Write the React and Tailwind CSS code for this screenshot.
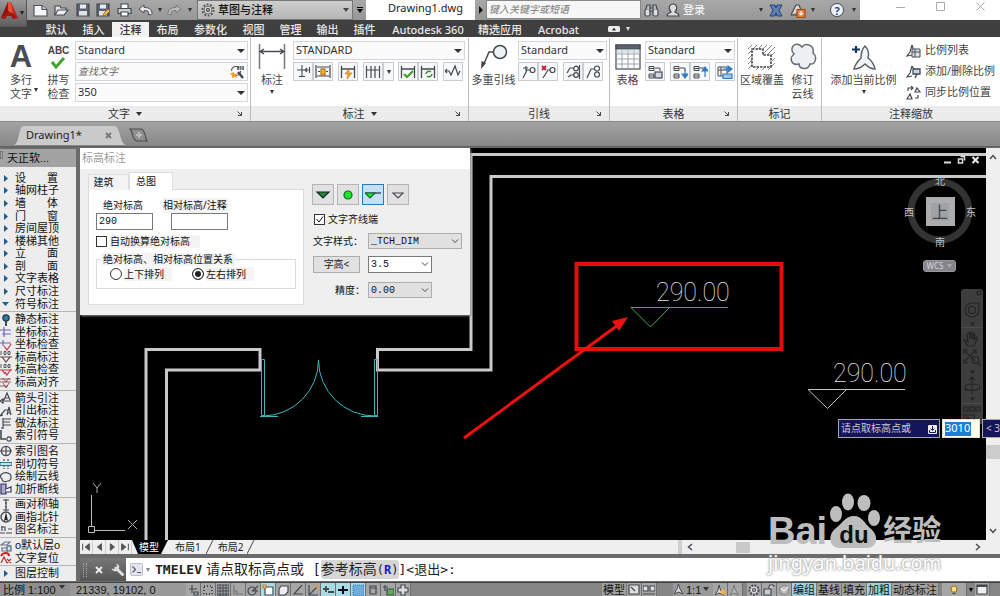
import React from "react";

const SANS = "font-['Noto_Sans','Noto_Sans_CJK_SC',sans-serif]";
const MONO = "font-['Liberation_Mono','Noto_Sans_CJK_SC',monospace]";
const DENSE = "font-['Liberation_Sans','Noto_Sans_CJK_SC',sans-serif]";

function Svg({ w = 16, h = 16, vb, children, className = "" }) {
  return (
    <svg
      width={w}
      height={h}
      viewBox={vb || `0 0 ${w} ${h}`}
      fill="none"
      stroke="#444a50"
      strokeWidth="1.2"
      className={`shrink-0 ${className}`}
      aria-hidden="true"
    >
      {children}
    </svg>
  );
}

const Down = ({ w = 7, className = "", fill = "#333" }) => (
  <svg width={w} height="4" viewBox="0 0 8 4" preserveAspectRatio="none" className={`shrink-0 ${className}`} aria-hidden="true">
    <path d="M0 0h8L4 4z" fill={fill} />
  </svg>
);

const Chevron = ({ className = "" }) => (
  <Svg w={8} h={5} className={className}>
    <path d="M1 .5l3 3 3-3" strokeWidth="1" />
  </Svg>
);

function Select({ label, value, className = "", arrow, children }) {
  return (
    <div className={`flex min-w-0 items-center ${className}`}>
      {children}
      <select aria-label={label} defaultValue={value} className="w-0 flex-1 appearance-none bg-transparent outline-none">
        <option>{value}</option>
      </select>
      {arrow || <Down w={8} />}
    </div>
  );
}

/* ---------- title bar ---------- */

function IconButton({ label, className = "", children }) {
  return (
    <button aria-label={label} className={`flex shrink-0 items-center justify-center ${className}`}>
      {children}
    </button>
  );
}

function TitleBar() {
  return (
    <header className="flex h-[20px] shrink-0 bg-linear-to-b from-[#a8a8a8] to-[#979797] text-[11px]">
      <button
        aria-label="应用程序菜单"
        className="z-10 flex h-[27px] w-[27px] shrink-0 items-center border-r border-b border-[#555] bg-linear-to-b from-[#9a9a9a] to-[#5f5f5f] pl-px"
      >
        <Svg w={18} h={20} className="mt-[-4px]">
          <path d="M7 1h3l7 16-5 1-2-4-4 0-2 4-4-1z" fill="#c3241a" stroke="none" />
          <path d="M7 1L0 17l8-5z" fill="#8f1510" stroke="none" />
          <path d="M7 1h3l2 11-5-2z" fill="#e8503c" stroke="none" />
          <path d="M0 17l7-5 5 0 5 5-5 1-2-3-4 0-2 3z" fill="#a41811" stroke="none" />
        </Svg>
        <Down w={4} fill="#222" className="ml-px" />
      </button>
      <div className="ml-[3px] flex shrink-0 items-center">
        <IconButton label="新建" className="w-[21px]">
          <Svg w={15} h={13}><path d="M1 1.5h8l5 4v6.500H1z" fill="#f4f5f7" stroke="#4d535b" /><path d="M9 1.500v4h5" fill="#c9ced4" stroke="#4d535b" /></Svg>
        </IconButton>
        <IconButton label="打开" className="w-[21px]">
          <Svg w={15} h={13}><path d="M1 11V2h5l1 2h5v2" fill="#dfe2e6" /><path d="M1 11l3-5h10l-4 5z" fill="#eef0f2" /></Svg>
        </IconButton>
        <IconButton label="保存" className="w-[21px]">
          <Svg w={14} h={14}><path d="M1 1h12v12H1z" fill="#5c636e" /><path d="M4 1.500h6v4H4z" fill="#e8ebef" stroke="none" /><path d="M3 8h8v4.500H3z" fill="#dfe3e8" stroke="none" /></Svg>
        </IconButton>
        <IconButton label="另存为" className="w-[21px]">
          <Svg w={15} h={14}><path d="M1 1h12v12H1z" fill="#5c636e" /><path d="M4 1.500h6v4H4z" fill="#e8ebef" stroke="none" /><path d="M3 8h8v4.500H3z" fill="#dfe3e8" stroke="none" /><path d="M7 13l1-3 4-4 2 2-4 4z" fill="#f0b454" stroke="#8a5a1c" strokeWidth=".7" /></Svg>
        </IconButton>
        <IconButton label="打印" className="w-[21px]">
          <Svg w={15} h={14}><path d="M4 6V1h7v5" fill="#fff" /><path d="M1 5.500h13v5H1z" fill="#c9cdd2" /><path d="M4 9h7v4H4z" fill="#fff" /></Svg>
        </IconButton>
        <IconButton label="放弃" className="w-[21px]">
          <Svg w={15} h={12}><path d="M1 5l5-4v2.500c5 0 8 2 8 6-1 2-3 1-4 1 2-3 0-4-4-4V9z" fill="#eee" strokeWidth="1" /></Svg>
        </IconButton>
        <IconButton label="放弃列表" className="w-[8px]"><Down w={4} /></IconButton>
        <IconButton label="重做" className="w-[21px]">
          <Svg w={15} h={12}><path d="M14 5L9 1v2.500c-5 0-8 2-8 6 1 2 3 1 4 1-2-3 0-4 4-4V9z" fill="#bbb" stroke="#777" strokeWidth="1" /></Svg>
        </IconButton>
        <IconButton label="重做列表" className="w-[10px]"><Down w={4} /></IconButton>
      </div>
      <Select
        label="工作空间"
        value="草图与注释"
        className="ml-[2px] w-[156px] shrink-0 gap-[3px] border border-[#777] bg-linear-to-b from-[#cfcfcf] to-[#b5b5b5] px-[3px] font-medium text-[#111]"
        arrow={<Down w={6} fill="#444" />}
      >
        <Svg w={14} h={14}><circle cx="7" cy="7" r="5.500" fill="#ddd" strokeDasharray="2 1.400" strokeWidth="2" stroke="#555" /><circle cx="7" cy="7" r="4" fill="#e4e4e4" strokeWidth="1" stroke="#666" /><circle cx="7" cy="7" r="1.800" fill="#999" strokeWidth="1" /></Svg>
      </Select>
      <IconButton label="自定义快速访问工具栏" className="w-[13px] flex-col gap-px">
        <span className="h-px w-[6px] bg-black" />
        <Down w={6} fill="#000" />
      </IconButton>
      <div className="w-[109px] shrink-0 bg-white pr-[1px] text-center leading-[16px] text-[#222]">
        <span className="ml-[11px]">Drawing1.dwg</span>
      </div>
      <IconButton label="展开搜索" className="w-[11px]">
        <Svg w={5} h={8}><path d="M1 0v8l4-4z" fill="#111" stroke="none" /></Svg>
      </IconButton>
      <input
        aria-label="搜索"
        placeholder="键入关键字或短语"
        className="mb-[1px] w-[155px] shrink-0 border border-[#888] bg-[#f7f7f7] px-[2px] text-[10px] italic outline-none placeholder:text-[#777]"
      />
      <IconButton label="查找" className="w-[21px]">
        <Svg w={15} h={14}><rect x="1" y="6" width="5" height="7" rx="1.500" fill="#ddd" /><rect x="9" y="6" width="5" height="7" rx="1.500" fill="#ddd" /><path d="M2 6l1-4h3v5M13 6l-1-4H9v5M6 5h3v3H6z" fill="#bbb" /></Svg>
      </IconButton>
      <IconButton label="用户" className="w-[21px]">
        <Svg w={14} h={14}><path d="M1 13c0-3 3-3 4-4C2 6 3 1 7 1s5 5 2 8c1 1 4 1 4 4z" fill="#ddd" /></Svg>
      </IconButton>
      <button className="shrink-0 text-white">登录</button>
      <div className="flex-1" />
      <IconButton label="登录选项" className="w-[8px]"><Down w={4} /></IconButton>
      <IconButton label="Exchange" className="w-[22px]">
        <Svg w={14} h={13}><path d="M1 1l5 0 1 3 1-3h5l-3 5.500L13 12H8L7 9l-1 3H1l3-5.500z" fill="#5b7fb5" stroke="#26406e" strokeWidth="1" /></Svg>
      </IconButton>
      <IconButton label="保持连接" className="w-[21px]">
        <Svg w={16} h={15}><path d="M1 12L6 2l3 0 2 5" fill="#ddd" /><path d="M1 12h6" /><rect x="7" y="6.500" width="8" height="8" fill="#e8813a" stroke="#a84d12" /><path d="M11 8v4m-2-2l2 2 2-2" stroke="#fff" /></Svg>
      </IconButton>
      <IconButton label="连接选项" className="w-[9px]"><Down w={4} /></IconButton>
      <IconButton label="帮助" className="ml-[8px] w-[24px]">
        <span className="flex h-[14px] w-[14px] items-center justify-center rounded-full border border-[#445] bg-[#eef3fa] text-[11px] leading-none font-bold text-[#1f4c94]">?</span>
      </IconButton>
      <IconButton label="帮助选项" className="w-[10px]"><Down w={4} /></IconButton>
      <div className="ml-[1px] flex shrink-0 items-center bg-white pb-[8px] pl-[20px]">
        <IconButton label="最小化" className="w-[40px]"><Svg w={9} h={9}><path d="M0 5.500h9" stroke="#aaa" strokeWidth="1" /></Svg></IconButton>
        <IconButton label="最大化" className="w-[40px]"><Svg w={9} h={9}><path d="M.5.5h8v8h-8z" stroke="#aaa" strokeWidth="1" /></Svg></IconButton>
        <IconButton label="关闭" className="w-[40px]"><Svg w={9} h={9}><path d="M.5.5l8 8m0-8l-8 8" stroke="#aaa" strokeWidth="1" /></Svg></IconButton>
      </div>
    </header>
  );
}

/* ---------- ribbon ---------- */

const TABS = [
  ["默认", "w-[37px]"], ["插入", "w-[37px]"], ["注释", "w-[37px]"], ["布局", "w-[37px]"], ["参数化", "w-[49px]"],
  ["视图", "w-[37px]"], ["管理", "w-[37px]"], ["输出", "w-[37px]"], ["插件", "w-[37px]"], ["Autodesk 360", "w-[90px]"],
  ["精选应用", "w-[54px]"], ["Acrobat", "w-[63px]"],
];

function TabRow() {
  return (
    <nav className="flex h-[17px] shrink-0 items-end bg-[#3f3f3f] pl-[38px] text-[11px] leading-[15px] font-medium">
      {TABS.map(([t, w]) => (
        <button key={t} className={`h-[15px] shrink-0 whitespace-nowrap ${w} ${t === "注释" ? "bg-[#f1f1f1] text-[#333]" : "text-[#e8e8e8]"}`}>
          {t}
        </button>
      ))}
      <IconButton label="最小化功能区" className="ml-[18px] h-[17px] gap-[6px]">
        <Svg w={12} h={6}><rect width="12" height="6" rx="1.500" fill="#eee" stroke="none" /><path d="M4 4.500l2-3 2 3z" fill="#333" stroke="none" /></Svg>
        <Down w={4} fill="#ddd" />
      </IconButton>
    </nav>
  );
}

function Panel({ title, menu, launcher, className, children }) {
  return (
    <section className={`flex flex-col border-r border-[#bdbdbd] ${className}`}>
      <div className="flex flex-1 pt-[3px]">{children}</div>
      <div className="flex h-[15px] items-center bg-[#ececec] px-[5px] text-[11px] text-[#333]">
        <span className="w-[8px]" />
        <span className="flex flex-1 items-center justify-center gap-[6px] leading-[15px]">
          {title}
          {menu && <Down w={6} />}
        </span>
        <span className="w-[8px]">
          {launcher && (
            <button aria-label={`${title}设置`} className="flex h-[8px] w-[8px] items-center">
              <Svg w={5} h={5}><path d="M.5.500l4 4M4.500 1v3.500H1" strokeWidth="1" /></Svg>
            </button>
          )}
        </span>
      </div>
    </section>
  );
}

function Big({ icon, lines, arrow, sideArrow, className }) {
  return (
    <button className={`flex shrink-0 flex-col items-center text-[11px] leading-[14px] text-[#444] ${DENSE} ${className}`}>
      <span className="flex h-[32px] items-center">{icon}</span>
      {lines.map((l, i) => (
        <span key={l} className="flex items-center whitespace-nowrap">
          {l}
          {sideArrow && i === 1 && <Down w={4} className="-mr-[6px] ml-[2px] mb-[8px]" />}
        </span>
      ))}
      {arrow && <Down w={4} className="mt-[3px]" />}
    </button>
  );
}

function Tool({ label, children, w = "w-[20px]" }) {
  return (
    <button aria-label={label} className={`flex h-[19px] shrink-0 items-center justify-center border border-[#c9cdd2] bg-[#f7f8f9] ${w}`}>
      {children}
    </button>
  );
}

const combo = "h-[19px] border border-[#d3d6da] bg-[#fbfbfb] px-[2px] text-[11px] text-[#333]";

const dimBase = <path d="M1.500 2v12M14.500 2v12M2 5h12" strokeWidth="1.300" />;
const tableLinks = (
  <>
    <path d="M1 1.500h5v4H1zM1 9h5v4H1zM1 3.500h5M1 11h5" strokeWidth="1" />
    <path d="M7 3h5v3" strokeWidth="1" />
  </>
);

function Ribbon() {
  return (
    <div className="flex h-[85px] shrink-0 border-b border-[#8a8a8a] bg-white pt-px">
      <Panel title="文字" menu launcher className="w-[251px] shrink-0">
        <Big className="w-[42px]" lines={["多行", "文字"]} sideArrow
          icon={<span className="text-[31px] leading-[32px] font-bold text-[#4a4e54]">A</span>} />
        <Big className="w-[33px]" lines={["拼写", "检查"]}
          icon={<span className="flex flex-col items-center text-[10px] leading-[11px] font-bold text-[#444]">ABC
            <Svg w={16} h={13}><path d="M2 6l4 5 8-9" stroke="#43a52d" strokeWidth="3" /></Svg></span>} />
        <div className="flex flex-1 flex-col gap-[2px] pr-[2px]">
          <Select label="文字样式" value="Standard" className={combo} />
          <div className={`flex items-center ${combo}`}>
            <input aria-label="查找文字" placeholder="查找文字" className="w-0 flex-1 text-[10px] italic outline-none placeholder:text-[#666]" />
            <button aria-label="查找">
              <Svg w={15} h={14}><circle cx="6" cy="6" r="4.500" strokeDasharray="10 4" /><path d="M8 7l5 6" strokeWidth="2.500" /><path d="M7 4h7M7 2h7" strokeWidth="1.500" strokeDasharray="2 .6" /><path d="M3 7l2 2 2-1-1 3 1 2-3-1-2 1V10L0 9z" fill="#efa12d" stroke="none" /></Svg>
            </button>
          </div>
          <Select label="文字高度" value="350" className={combo} />
        </div>
      </Panel>

      <Panel title="标注" menu launcher className="w-[218px] shrink-0">
        <Big className="w-[42px]" lines={["标注"]} arrow
          icon={<Svg w={28} h={26}><path d="M1.500 0v25M26.500 0v25" strokeWidth="1.500" stroke="#777" /><path d="M2 7.500h24M6 5L2 7.500 6 10M22 5l4 2.500-4 2.500" strokeWidth="1.300" /></Svg>} />
        <div className="flex flex-1 flex-col gap-[2px] pr-[3px]">
          <Select label="标注样式" value="STANDARD" className={combo} />
          <div className="flex">
            <Tool label="打断"><Svg w={15} h={15}><path d="M1 6h8M6 1v11M3 12.500h6M13.500 3v6M9 6h4M11 4l-2 2 2 2" strokeWidth="1.100" /></Svg></Tool>
            <Tool label="调整间距"><Svg w={16} h={15}><path d="M1 1v13M15 1v13M2 3h12M2 12h12M3 7.500h2M11 7.500h2" /><rect x="6" y="5" width="4" height="6" fill="#f2b33c" stroke="#a87410" /></Svg></Tool>
            <span className="w-[5px]" />
            <Tool label="快速标注"><Svg w={16} h={15}>{dimBase}<path d="M9 5L5 10h3l-1 5 5-6H9z" fill="#f2a22d" stroke="#c77612" strokeWidth=".6" /></Svg></Tool>
            <span className="w-[5px]" />
            <Tool label="连续"><Svg w={16} h={15}><path d="M1.500 2v12M6 2v12M10 2v12M14.500 2v12M2 6h12" /></Svg></Tool>
            <Tool label="连续选项" w="w-[11px]"><Down w={4} /></Tool>
            <span className="w-[4px]" />
            <Tool label="检验"><Svg w={16} h={15}>{dimBase}<path d="M4 10l3 3 6-6" stroke="#3fa22b" strokeWidth="2.200" /></Svg></Tool>
            <Tool label="更新"><Svg w={16} h={15}>{dimBase}<path d="M6 10a3 3 0 015-2M12 10a3 3 0 01-5 2" stroke="#3b8f2b" strokeWidth="1.500" /></Svg></Tool>
            <span className="w-[5px]" />
            <Tool label="折弯标注"><Svg w={16} h={15}><path d="M0 7h4l2 4 4-9 3 9 2-4M2 5L0 7l2 2" /></Svg></Tool>
          </div>
        </div>
      </Panel>

      <Panel title="引线" launcher className="w-[141px] shrink-0">
        <Big className="w-[49px]" lines={["多重引线"]}
          icon={<Svg w={28} h={26}><circle cx="20" cy="8" r="6.500" fill="#eef1f5" strokeWidth="1.500" /><path d="M13.500 8H9L3 22" strokeWidth="1.500" /><path d="M1 25l.5-8 4.500 2z" fill="#444" stroke="none" /></Svg>} />
        <div className="flex flex-1 flex-col gap-[2px] pr-[2px]">
          <Select label="多重引线样式" value="Standard" className={combo} />
          <div className="flex">
            <Tool label="添加引线"><Svg w={15} h={14}><circle cx="11.500" cy="5" r="2.500" /><path d="M9 5H6l-4 8M5 1v5M2 3h5" /></Svg></Tool>
            <Tool label="删除引线"><Svg w={15} h={14}><circle cx="11.500" cy="5" r="2.500" /><path d="M9 5H7l-5 8" /><path d="M1 1l4 4M5 1L1 5" stroke="#c8202a" strokeWidth="1.800" /></Svg></Tool>
            <span className="w-[5px]" />
            <Tool label="对齐"><Svg w={15} h={14}><circle cx="10" cy="3.500" r="2.300" /><circle cx="10" cy="10" r="2.300" /><path d="M8 3H4L1 8M8 10H5l-3 2M13.500 0v14" /></Svg></Tool>
            <Tool label="合并"><Svg w={15} h={14}><circle cx="11" cy="3.500" r="2.500" /><circle cx="11" cy="9.500" r="2.500" /><path d="M8 4H5L1 13" /></Svg></Tool>
          </div>
        </div>
      </Panel>

      <Panel title="表格" launcher className="w-[128px] shrink-0">
        <Big className="w-[35px]" lines={["表格"]}
          icon={<Svg w={26} h={27}><rect x="1" y="1" width="24" height="24" fill="#fff" /><path d="M1 1h24v4H1z" fill="#5b636d" /><path d="M1 10h24M1 15h24M1 20h24M7 5v20M13 5v20M19 5v20" stroke="#9aa2ab" strokeWidth="1" /><path d="M1.500 5.500h23v4h-23z" fill="#c5d2e3" stroke="none" opacity=".6" /></Svg>} />
        <div className="flex flex-1 flex-col gap-[2px] pr-[2px]">
          <Select label="表格样式" value="Standard" className={combo} />
          <div className="flex justify-between">
            <Tool label="数据链接"><Svg w={15} h={14}>{tableLinks}<rect x="7" y="7" width="7" height="6" fill="#cfd8e2" /></Svg></Tool>
            <span className="flex">
              <Tool label="从源下载"><Svg w={15} h={14}>{tableLinks}<path d="M12 5v6M9 9l3 4 3-4z" fill="#2f7dc4" stroke="#2f7dc4" /></Svg></Tool>
              <Tool label="上载到源"><Svg w={15} h={14}>{tableLinks}<path d="M12 12V5M9 6l3-4 3 4z" fill="#2f7dc4" stroke="#2f7dc4" /></Svg></Tool>
            </span>
            <Tool label="提取数据"><Svg w={16} h={14}><path d="M1 2h9v9H1zM1 5h9M4 2v9" strokeWidth="1" /><path d="M6 4h6M11 1l4 3-4 3z" fill="#2f7dc4" stroke="#2f7dc4" /><path d="M6 9h9v4.500H6z" fill="#9cc6ea" stroke="#2f7dc4" /></Svg></Tool>
          </div>
        </div>
      </Panel>

      <Panel title="标记" className="w-[84px] shrink-0">
        <Big className="w-[48px]" lines={["区域覆盖"]}
          icon={<Svg w={28} h={27}><path d="M0 5l4-4M0 10L9 1M0 15l5-5M0 20l5-5M0 25l5-5M10 5l4-4M15 5l4-4M15 10l9-9M19 11l8-8M22 13l5-5M24 17l3-3M24 22l3-3M8 26l3-3M14 26l3-3M20 26l5-5" stroke="#8a8a8a" strokeWidth="1" /><path d="M4 5h11v6h8v12H4z" fill="#fff" strokeWidth="1.600" strokeDasharray="2.500 1" /></Svg>} />
        <Big className="w-[33px]" lines={["修订", "云线"]}
          icon={<Svg w={28} h={28}><path d="M13 4c3-5 13-2 11 6 5 4 2 12-3 11-2 7-11 5-11 0-8 2-10-6-5-10-6-6 2-14 8-7z" fill="#eef0f3" stroke="#666c74" strokeWidth="1.500" /></Svg>} />
      </Panel>

      <Panel title="注释缩放" className="min-w-[178px] flex-1 border-r-0">
        <Big className="w-[83px]" lines={["添加当前比例"]} arrow
          icon={<Svg w={26} h={27}><path d="M14 2c3 3 4 8 3 12 4 3 6 6 7 11-4 0-7-2-10-5-3 3-6 5-11 5 1-5 4-8 7-11 0-4 1-9 4-12z" fill="#f2f4f6" stroke="#565c64" strokeWidth="1.400" /><path d="M5 2v7M1 5.500h8" stroke="#14335f" strokeWidth="2.200" /></Svg>} />
        <div className="flex flex-col gap-[2px] pl-[1px] text-[11px] text-[#444]">
          <button className="flex h-[19px] items-center gap-[4px] whitespace-nowrap">
            <Svg w={15} h={14}><path d="M6 1L4 8l-3 4 5-1M6 1l2 6" /><path d="M6 5h8v8H6zM9 5v8M6 8h8" fill="#dde3ea" strokeWidth="1" /></Svg>比例列表
          </button>
          <button className="flex h-[19px] items-center gap-[4px] whitespace-nowrap">
            <Svg w={15} h={14}><path d="M6 1L4 8l-3 4 5-1M6 1l2 3" /><path d="M7 4h7v5H7zM9 13l2-4 2 0" fill="#c9d6e6" strokeWidth="1.300" /></Svg>添加/删除比例
          </button>
          <button className="flex h-[19px] items-center gap-[4px] whitespace-nowrap">
            <Svg w={15} h={14}><path d="M4 8l2 5H1zM11 2l3 4H9zM2 5V2h4M5 0l2 2-2 2M9 12h3V9" /></Svg>同步比例位置
          </button>
        </div>
      </Panel>
    </div>
  );
}

function FileTabs() {
  return (
    <div className="flex h-[25px] shrink-0 items-end border-b border-[#5e5e5e] bg-linear-to-b from-[#a2a2a2] to-[#888] pb-px pl-[14px]">
      <div className="flex">
        <svg width="10" height="19" viewBox="0 0 10 19" aria-hidden="true"><path d="M0 19C6 17 4 0 10 0v19z" fill="#cacaca" /></svg>
        <div className="flex h-[19px] w-[90px] items-center justify-between bg-[#cacaca] pr-[2px] pl-[2px] text-[11px] text-[#222]">
          Drawing1*
          <IconButton label="关闭 Drawing1"><Svg w={7} h={7}><path d="M1 1l5 5M6 1L1 6" stroke="#777" strokeWidth="1.800" /></Svg></IconButton>
        </div>
        <svg width="12" height="19" viewBox="0 0 12 19" aria-hidden="true"><path d="M0 0c7 0 5 17 12 19H0z" fill="#cacaca" /></svg>
      </div>
      <IconButton label="新建图形" className="mb-[3px] ml-[3px]">
        <Svg w={19} h={14}><path d="M1 1h11c5 1 4 10 6 12H8C3 12 4 4 1 1z" fill="#8e8e8e" stroke="#4c4c4c" /><path d="M10 4v6M7 7h6" stroke="#bbb" strokeWidth="2" /></Svg>
      </IconButton>
    </div>
  );
}

/* ---------- side menu ---------- */

const ic = {
  static: <><circle cx="6" cy="4" r="3.200" fill="#2c7b9b" stroke="#153b4c" /><path d="M6 7v5" strokeWidth="2" /></>,
  coord: <path d="M0 4h11M2 8h9M4 1v10" stroke="#6a6ab0" />,
  coordCheck: <><path d="M0 4h11M3 1v6" stroke="#6a6ab0" /><path d="M4 7l3 4 4-6" stroke="#c34" /></>,
  elev: <><path d="M1 0v4M4 .5h2v3H4zM8 .5h2v3H8z" strokeWidth=".9" /><path d="M0 6h12M2 6l4 5 4-5" stroke="#644" /></>,
  elevCheck: <><path d="M1 0v4M4 .5h2v3H4zM8 .5h2v3H8z" strokeWidth=".9" /><path d="M0 6h12M2 6l3 4M5 8l2 3 4-6" stroke="#c34" /></>,
  align: <path d="M0 2h11M0 5h11M0 9h8M3 1l3 4 3-4M3 6l3 5 3-5" stroke="#844" strokeWidth=".9" />,
  arrow: <path d="M0 9l3-2v4zM2 9h9M4 8l3-7 3 7M5 6h4" />,
  leader: <path d="M0 11l5-6h5M0 11l3-1M7 10l2-8 2 8M7 8h4" />,
  method: <path d="M3 1v11M3 2h8M3 5h7M3 8h8M1 11h2" />,
  index: <><path d="M1 0v9h5M1 0v4" strokeWidth="1.600" /><circle cx="9" cy="9" r="2.200" /></>,
  indexName: <><circle cx="6" cy="6" r="4.600" strokeWidth="1.400" /><path d="M0 6h12M6 1v10" /></>,
  section: <><path d="M4 1v10M8 1v10" strokeDasharray="2 1" /><path d="M0 4.500h12v3H0z" fill="#bfe6e6" stroke="#378" /></>,
  cloud: <path d="M2 3c3-3 6-1 8 0 2 3 1 7-2 7-3 1-6 1-6-2C0 6 0 4 2 3z" />,
  breakLine: <><path d="M1 1h5v10H1z" fill="#aac" stroke="#336" /><path d="M6 6l5-2v5H6" fill="#fff" stroke="#336" /></>,
  axis: <path d="M6 0v12M3 1h6M3 11h6M5 4h2M5 8h2" />,
  north: <><circle cx="6" cy="6" r="5" strokeWidth="1.400" /><path d="M6 1l2 9-2-1-2 1z" fill="#222" stroke="none" /></>,
  name: <path d="M0 9h5M1 3h4v4M2 2v5M8 5h4M6 9h6" />,
  layer: <><path d="M1 5l4-3h5l-3 3zM1 8h6l3-3M2 8v3h6" stroke="#678" /><path d="M7 6h4v5H7z" fill="#cde" stroke="#567" /></>,
  reset: <><path d="M1 4c2-4 8-4 8 0" stroke="#c22" strokeWidth="2" /><path d="M1 11l3-6 3 6M7 7l4 4M11 7l-4 4" stroke="#a33" /></>,
};

const GROUPS = [
  { grow: "flex-11", items: ["设 置", "轴网柱子", "墙 体", "门 窗", "房间屋顶", "楼梯其他", "立 面", "剖 面", "文字表格", "尺寸标注", "符号标注"] },
  { grow: "flex-6", items: ["静态标注", "坐标标注", "坐标检查", "标高标注", "标高检查", "标高对齐"], icons: ["static", "coord", "coordCheck", "elev", "elevCheck", "align"] },
  { grow: "flex-4", items: ["箭头引注", "引出标注", "做法标注", "索引符号"], icons: ["arrow", "leader", "method", "index"] },
  { grow: "flex-4", items: ["索引图名", "剖切符号", "绘制云线", "加折断线"], icons: ["indexName", "section", "cloud", "breakLine"] },
  { grow: "flex-3", items: ["画对称轴", "画指北针", "图名标注"], icons: ["axis", "north", "name"] },
  { grow: "flex-2", items: ["o默认层o", "文字复位"], icons: ["layer", "reset"] },
  { grow: "flex-1", items: ["图层控制"] },
];

function SideMenu() {
  return (
    <aside className={`mr-[4px] flex w-[76px] shrink-0 flex-col bg-[#ededed] text-[11px] text-[#111] ${DENSE}`}>
      <div className="flex h-[20px] shrink-0 items-center border-t-2 border-[#6b6b6b] bg-[#a3a3a3]">
        <span className="mb-[6px] h-[8px] w-[3px] border border-[#777]" />
        <span className="pl-[4px]">天正软...</span>
      </div>
      <div className="flex flex-1 flex-col divide-y divide-[#b5b5b5] pt-[4px]">
        {GROUPS.map((g, gi) => (
          <div key={gi} className={`flex min-h-0 flex-col py-px ${g.grow}`}>
            {g.items.map((t, i) => (
              <button key={t} className="flex min-h-0 flex-1 items-center leading-none">
                <span className="flex w-[15px] shrink-0">
                  {g.icons ? (
                    <Svg w={12} h={12}>{ic[g.icons[i]]}</Svg>
                  ) : t === "符号标注" ? (
                    <Down w={7} fill="#1f5c92" className="ml-[2px]" />
                  ) : (
                    <Svg w={4} h={7} className="ml-[4px]"><path d="M0 0v7l4-3.500z" fill="#1f5c92" stroke="none" /></Svg>
                  )}
                </span>
                <span className="flex w-[43px] justify-between whitespace-nowrap">
                  {t.split(" ").map((p) => <span key={p}>{p}</span>)}
                </span>
              </button>
            ))}
          </div>
        ))}
      </div>
    </aside>
  );
}

/* ---------- elevation dialog ---------- */

function Dialog() {
  const modes = [
    ["实心三角", <path d="M2 4h12l-6 6z" fill="#1f8a2c" stroke="#123" />],
    ["圆点", <circle cx="8" cy="7" r="4" fill="#25e22b" stroke="#163" />],
    ["三角引线", <><path d="M0 5h16" stroke="#234" /><path d="M0 5h10l-5 5z" fill="#25e22b" stroke="#163" /></>],
    ["空心三角", <path d="M3 5h10l-5 5z" />],
  ];
  return (
    <div role="dialog" aria-label="标高标注" className="absolute top-0 left-0 flex h-[167px] w-[390px] flex-col bg-[#efefef] text-[10px] text-[#111] shadow-[1px_1px_2px_#888]">
      <div className="h-[21px] bg-white pl-[2px] text-[11px] leading-[20px] text-[#9a9a9a]">标高标注</div>
      <div className="flex flex-1">
        <div className="ml-[8px] w-[216px] pt-[3px]">
          <div className="flex items-end">
            <button className="h-[16px] w-[41px] border border-b-0 border-[#ddd] bg-[#f3f3f3] pr-[10px]">建筑</button>
            <button className="h-[18px] w-[44px] border border-b-0 border-[#ddd] bg-white pr-[10px]">总图</button>
          </div>
          <div className="-mt-px h-[116px] border border-[#dcdcdc] bg-white px-[7px] pt-[8px]">
            <div className="flex gap-[18px]">
              <label className="flex w-[57px] flex-col">
                <span className="pl-[7px] leading-[15px] whitespace-nowrap">绝对标高</span>
                <input defaultValue="290" className={`h-[17px] w-[57px] border border-[#7a7a7a] bg-white px-[2px] ${MONO}`} />
              </label>
              <label className="flex flex-col">
                <span className="-ml-[8px] bg-[#f4f4f4] leading-[15px] whitespace-nowrap">相对标高/注释</span>
                <input className="h-[17px] w-[57px] border border-[#7a7a7a] bg-white px-[2px]" />
              </label>
            </div>
            <label className="mt-[5px] flex items-center gap-[3px] leading-[13px]">
              <input type="checkbox" className="h-[11px] w-[11px] appearance-none border border-[#333] bg-white" />
              <span className="bg-[#f4f4f4] pr-[10px]">自动换算绝对标高</span>
            </label>
            <fieldset className="mt-[5px] h-[36px] border border-[#dcdcdc] px-[4px]">
              <legend className="bg-[#f4f4f4] px-[2px] leading-[13px]">绝对标高、相对标高位置关系</legend>
              <div className="flex items-center gap-[20px] pt-px pl-[9px]">
                <label className="flex items-center gap-[2px] leading-[14px]">
                  <input type="radio" name="pos" className="h-[12px] w-[12px] appearance-none rounded-full border border-[#333] bg-white" />
                  <span className="bg-[#f4f4f4] pr-[8px]">上下排列</span>
                </label>
                <label className="flex items-center gap-[2px] leading-[14px]">
                  <input type="radio" name="pos" defaultChecked className="h-[12px] w-[12px] appearance-none rounded-full border border-[#333] bg-[#222] shadow-[inset_0_0_0_2px_white]" />
                  <span className="bg-[#f4f4f4] pr-[8px]">左右排列</span>
                </label>
              </div>
            </fieldset>
          </div>
        </div>
        <div className="ml-[8px] flex w-[150px] flex-col pt-[15px]">
          <div className="flex gap-[3px]">
            {modes.map(([n, d], i) => (
              <button key={n} aria-label={n} className={`flex h-[21px] w-[22px] items-center justify-center border ${i === 2 ? "border-[#2a7ab8] bg-[#c5e0f5]" : "border-[#b4b4b4] bg-[#e1e1e1]"}`}>
                <Svg w={16} h={14} className="mr-px">{d}</Svg>
              </button>
            ))}
          </div>
          <label className="mt-[8px] flex items-center gap-[3px] pl-[2px] leading-[13px]">
            <span className="grid">
              <input type="checkbox" defaultChecked className="col-start-1 row-start-1 h-[11px] w-[11px] appearance-none border border-[#333] bg-white" />
              <Svg w={11} h={11} className="pointer-events-none col-start-1 row-start-1"><path d="M2.500 5l2.500 3 4-5.500" strokeWidth="1" stroke="#111" /></Svg>
            </span>
            文字齐线端
          </label>
          <div className="mt-[7px] flex items-center justify-between">
            <span className="pl-[1px]">文字样式：</span>
            <Select label="文字样式" value="_TCH_DIM" arrow={<Chevron />} className={`h-[16px] w-[94px] border border-[#adadad] bg-[#e1e1e1] px-[2px] ${MONO}`} />
          </div>
          <div className="mt-[7px] flex items-center gap-[8px]">
            <button className="ml-[1px] h-[17px] w-[47px] border border-[#adadad] bg-[#e1e1e1]">字高&lt;</button>
            <Select label="字高" value="3.5" arrow={<Chevron />} className={`h-[17px] w-[64px] border border-[#7a7a7a] bg-white px-[2px] ${MONO}`} />
          </div>
          <div className="mt-[9px] flex items-center">
            <span className="w-[56px] pl-[23px] whitespace-nowrap">精度：</span>
            <Select label="精度" value="0.00" arrow={<Chevron />} className={`h-[16px] w-[64px] border border-[#adadad] bg-[#e1e1e1] px-[2px] ${MONO}`} />
          </div>
        </div>
      </div>
    </div>
  );
}

/* ---------- drawing area ---------- */

function Drawing() {
  return (
    <svg width="906" height="392" viewBox="80 148 906 392" className="absolute top-0 left-0" fill="none" aria-label="图形">
      <g stroke="#c9c9c9" strokeWidth="3">
        <path d="M146 540V349.500H260V370H166.500V540" />
        <path d="M986 154.500H471V349.500H377.500V370H491V176.500H986" />
      </g>
      <g stroke="#3fb6bd" strokeWidth="1">
        <path d="M261.500 359.500h3v56h-3zM374.500 359.500h3v56h-3zM260 416.500h18M361 416.500h17" />
        <path d="M264 416A56 56 0 00318.500 360A56 56 0 00375 416" />
      </g>
      <g stroke="#bbb">
        <path d="M91.500 495v31M95 530.500h30M88.500 526.500h6v6h-6z" />
        <path d="M93 483l4 5v5M101 483l-4 5M128 520l9 9M137 520l-9 9" strokeWidth=".9" />
      </g>
      <path d="M631 307.500H728M631 307.500l19.500 19.500 19-19.500" stroke="#4ea64e" />
      <path d="M808 389.500H905M808 389.500l19.500 19 19-19" stroke="#c4c4c4" />
      <g fill="#e6e6e6" fontSize="25" className="font-['Roboto',sans-serif] font-thin">
        <text x="656" y="301">290.00</text>
        <text x="833" y="382">290.00</text>
      </g>
      <rect x="576.500" y="264" width="205" height="85" stroke="#e90c0c" strokeWidth="4" />
      <path d="M464 438L618 325" stroke="#f01010" strokeWidth="3" />
      <path d="M628 317l-9 14-7-10z" fill="#f01010" />
    </svg>
  );
}

function ViewTools() {
  return (
    <>
      <div className="absolute top-[6px] right-[6px] flex gap-[5px]">
        <IconButton label="最小化图形"><Svg w={9} h={11}><path d="M1 8.500h7" stroke="#ddd" strokeWidth="2" /></Svg></IconButton>
        <IconButton label="还原图形"><Svg w={9} h={11}><path d="M3.500 2.500h4v4M1.500 5h4v4h-4z" stroke="#ddd" strokeWidth="1.500" /></Svg></IconButton>
        <IconButton label="关闭图形"><Svg w={9} h={11}><path d="M1.500 3l6 6M7.500 3l-6 6" stroke="#eee" strokeWidth="2" /></Svg></IconButton>
      </div>
      <div className="absolute top-[27px] right-[9px] grid w-[74px] grid-cols-[12px_1fr_12px] items-center justify-items-center text-[10px] leading-[12px] text-[#c2c2c2]">
        <svg width="66" height="66" viewBox="0 0 66 66" className="absolute top-[3px] left-[4px]" aria-hidden="true">
          <circle cx="33" cy="33" r="29" fill="none" stroke="#333" strokeWidth="7" />
        </svg>
        <span className="relative col-span-3">北</span>
        <span className="relative">西</span>
        <button className="relative my-[10px] flex h-[29px] w-[29px] items-center justify-center border border-[#aaa] bg-[#adadad]">
          <span className="bg-[#9fa2a6] px-[1px] text-[16px] leading-[18px] text-[#444]">上</span>
        </button>
        <span className="relative">东</span>
        <span className="relative col-span-3">南</span>
      </div>
      <button className="absolute top-[112px] right-[30px] flex h-[12px] w-[33px] items-center justify-center gap-[4px] rounded-[3px] border border-[#999] bg-[#85858d] text-[8px] leading-none text-[#d5d5d5]">
        WCS <Down w={5} fill="#aaa" />
      </button>
      <div className="absolute top-[141px] right-[3px] h-[135px] w-[22px] rounded-t-[3px] bg-[#3d3d3d]">
        <svg width="22" height="135" viewBox="0 0 22 135" fill="none" stroke="#242424" strokeWidth="1.200" aria-hidden="true">
          <circle cx="18" cy="4" r="2" />
          <path d="M11 14h7v7a7 7 0 11-7-7z" /><circle cx="11" cy="21" r="3.500" />
          <path d="M10 34h3l-1.500 2zM10 82h3l-1.500 2zM10 109h3l-1.500 2z" fill="#222" />
          <path d="M1 38.500h20M1 114.500h20" stroke="#4c4c4c" />
          <path d="M7 57c-2-3-5-6-4-7l4 3-1-8 2-1 1 6V43h2v7l2-6 1 1-1 6 3-3c1 2-2 6-3 9z" />
          <path d="M4 62l10 10M4 72l10-10M3 65v-4h4M3 70v4h4M11 61h4v4" /><circle cx="14.500" cy="71" r="3.500" /><path d="M17 74l3 3" />
          <path d="M11 89v16M8 91l3-3 3 3M4 98c0-4 15-4 15 0s-13 4-15 2M4 97v4l3-1" />
          <path d="M3 118h4v4H3zM9 118h4v4H9zM15 118h4v4h-4zM3 126h10v9H3zM6 128v5l4-2.500z" />
        </svg>
      </div>
    </>
  );
}

function DynamicPrompt() {
  return (
    <div className="absolute top-[271px] right-0 flex h-[19px] gap-[2px] text-[11px] text-[#c9c9c9]">
      <div className="flex w-[102px] items-center justify-between border border-[#a9a9a0] bg-[#15155c] px-[2px]">
        <span className="text-[10px] whitespace-nowrap">请点取标高点或</span>
        <Svg w={9} h={9} className="mt-[2px]"><rect width="9" height="9" rx="1" fill="#eee" stroke="none" /><path d="M4.500 1v4M2.500 3.500l2 2 2-2M1.500 5v2.500h6V5" stroke="#15155c" strokeWidth="1" /></Svg>
      </div>
      <div className="flex w-[38px] items-center border border-[#e2e2c8] bg-[#fdfdf0] px-[2px]">
        <input aria-label="距离" defaultValue="3010" className="h-[14px] w-[26px] bg-[#1b7fd6] text-white outline-none" />
      </div>
      <div className="flex w-[18px] items-center overflow-hidden border border-r-0 border-[#a9a9a0] bg-[#15155c] pl-[3px] text-[10px] whitespace-nowrap">&lt; 3</div>
    </div>
  );
}

function Watermark() {
  return (
    <div className="pointer-events-none absolute right-[54px] bottom-[5px] flex w-[178px] flex-col text-[#bdbdbd]">
      <div className="flex h-[60px] items-end">
        <span className="font-['Liberation_Sans',sans-serif] text-[38px] leading-[36px] font-bold">Bai</span>
        <svg width="54" height="58" viewBox="0 0 54 58" className="shrink-0" aria-hidden="true">
          <g fill="#bdbdbd">
            <ellipse cx="9" cy="23" rx="6" ry="8" /><ellipse cx="21" cy="11" rx="6" ry="8.500" /><ellipse cx="37" cy="12" rx="6.500" ry="8" /><ellipse cx="47" cy="27" rx="6" ry="8" />
            <path d="M27 25c8 0 11 8 16 12 10 8 7 20-3 20H13C2 57 0 44 9 37c7-5 9-12 18-12z" />
          </g>
          <text x="27" y="52" textAnchor="middle" fontSize="24" fill="#111" className="font-['Liberation_Sans',sans-serif] font-bold">du</text>
        </svg>
        <span className="pl-[2px] text-[29px] leading-[38px] font-bold whitespace-nowrap">经验</span>
      </div>
      <span className="pt-[1px] text-[20px] leading-[26px] text-white [text-shadow:0_0_2px_#888,0_0_3px_#aaa]">jingyan.baidu.com</span>
    </div>
  );
}

function VScroll() {
  return (
    <div className="flex w-[14px] shrink-0 flex-col items-center justify-between bg-[#efefef] py-[6px]">
      <IconButton label="向上滚动"><Svg w={8} h={6}><path d="M1 5l3-3.500L7 5" strokeWidth="1.400" /></Svg></IconButton>
      <span className="mt-auto mb-[69px] h-[14px] w-full bg-[#cdcdcd]" />
      <IconButton label="向下滚动"><Svg w={8} h={6}><path d="M1 1l3 3.500L7 1" strokeWidth="1.400" /></Svg></IconButton>
    </div>
  );
}

function LayoutTabs() {
  const nav = ["M2 2v8M10 2L5 6l5 4z", "M9 2L4 6l5 4z", "M4 2l5 4-5 4z", "M10 2v8M2 2l5 4-5 4z"];
  const Slash = () => <Svg w={8} h={14}><path d="M0 14L7 0" strokeWidth="1" /></Svg>;
  return (
    <div className="flex h-[14px] shrink-0 items-stretch bg-[#efefef] text-[10px] leading-[14px] text-[#222]">
      {nav.map((d, i) => (
        <button key={d} aria-label={["第一个", "上一个", "下一个", "最后一个"][i]} className="flex w-[13px] items-center justify-center border-r border-[#ccc]">
          <Svg w={10} h={10} vb="0 0 12 12"><path d={d} fill="#555" stroke="#555" /></Svg>
        </button>
      ))}
      <svg width="7" height="14" viewBox="0 0 7 14" aria-hidden="true"><path d="M0 0h7v14H6z" fill="#000" /></svg>
      <button className="bg-black text-white">模型</button>
      <svg width="9" height="14" viewBox="0 0 9 14" aria-hidden="true"><path d="M0 0h9L2 14H0z" fill="#000" /></svg>
      <button className="pr-[5px] pl-[7px]">布局1</button>
      <Slash />
      <button className="pr-[4px] pl-[4px]">布局2</button>
      <Slash />
      <div className="flex-1" />
      <span className="w-[4px] bg-[#cfcfcf]" />
      <div className="flex w-[304px] items-center">
        <IconButton label="向左滚动" className="w-[16px]"><Svg w={6} h={8}><path d="M5 1L1.500 4 5 7" strokeWidth="1.400" /></Svg></IconButton>
        <span className="ml-[38px] h-[11px] w-[14px] bg-[#c9c9c9]" />
        <span className="flex-1" />
        <IconButton label="向右滚动" className="w-[16px]"><Svg w={6} h={8}><path d="M1 1l3.500 3L1 7" strokeWidth="1.400" /></Svg></IconButton>
      </div>
      <span className="w-[14px]" />
    </div>
  );
}

function CommandLine() {
  return (
    <div className="mt-[4px] flex h-[23px] shrink-0 bg-white">
      <div className="flex w-[46px] shrink-0 items-center gap-[8px] bg-linear-to-b from-[#777] to-[#555] pl-[3px]">
        <span className="h-[14px] w-[4px] border-x border-dotted border-[#aaa]" />
        <IconButton label="关闭命令行"><Svg w={8} h={8}><path d="M1 1l6 6M7 1L1 7" stroke="#eee" strokeWidth="1.800" /></Svg></IconButton>
        <IconButton label="自定义"><Svg w={13} h={13}><path d="M5 5l6.500 6.500" stroke="#ddd" strokeWidth="3" strokeLinecap="round" /><path d="M5.500.5a4 4 0 11-5 5L3 6l2.500-1L6 3z" fill="#ddd" stroke="none" /></Svg></IconButton>
      </div>
      <div className="flex flex-1 items-center font-['DejaVu_Sans_Mono','Noto_Sans_CJK_SC',monospace] text-[14px] whitespace-pre text-[#222]">
        <IconButton label="最近使用的命令" className="ml-[4px] gap-[3px] pr-[5px]">
          <Svg w={13} h={13}><rect x=".5" y=".5" width="12" height="12" rx="1" fill="#e3e6ec" stroke="#b9bec6" strokeWidth="1" /><path d="M2.500 3.500l3 3-3 3M7 9.500h4" stroke="#556" /></Svg>
          <Down w={4} fill="#888" />
        </IconButton>
        <b className="text-[13px]">TMELEV</b>
        <span className="pl-[4px]">请点取标高点或 [</span>
        <button className="rounded-[3px] bg-[#d6d6d6] leading-[18px]">参考标高<span className="text-[12px]">(<b className="text-[#1a1ad0]">R</b>)</span></button>
        <span className="text-[13px]">]&lt;退出&gt;:</span>
      </div>
    </div>
  );
}

/* ---------- status bar ---------- */

function Cell({ label, on, children, w = "w-[15px]" }) {
  return (
    <button aria-label={label} className={`flex h-[14px] shrink-0 items-center justify-center border-r border-[#6f6f6f] ${w} ${on ? "bg-[#a9dbe4]" : "bg-[#a6a6a6]"}`}>
      <Svg w={12} h={12}>{children}</Svg>
    </button>
  );
}

function Word({ on, children }) {
  return (
    <button className={`flex shrink-0 border-r border-[#777] px-[1px] whitespace-nowrap ${on ? "bg-[#9fd5e0]" : "bg-[#a0a0a0]"}`}>{children}</button>
  );
}

function StatusBar() {
  return (
    <footer className={`flex h-[14px] shrink-0 overflow-hidden border-t border-[#444] bg-[#858585] text-[11px] leading-[14px] text-[#111] ${DENSE}`}>
      <button className="flex w-[70px] shrink-0 gap-[3px] bg-[#8f8f8f] pl-[3px] whitespace-nowrap">
        <span>比例</span><span>1:100</span><Down w={6} className="mt-[2px]" />
      </button>
      <span className="w-[116px] shrink-0 bg-[#999] pl-[6px] whitespace-pre">21339, 19102, 0</span>
      <Cell label="推断约束"><path d="M2 5h8M5 1v8M7 8h4v3H7z" /></Cell>
      <Cell label="捕捉模式"><path d="M2 2h8v8H2z" strokeDasharray="1 2" strokeWidth="2" /></Cell>
      <Cell label="栅格显示"><path d="M0 1h12v11H0zM0 4h12M0 7h12M0 10h12M3 1v11M6 1v11M9 1v11" strokeWidth="1" /></Cell>
      <Cell label="正交模式"><path d="M2 1v9h9M2 7h3v3" stroke="#777" /></Cell>
      <Cell label="极轴追踪"><circle cx="5" cy="7" r="4" /><path d="M5 7l6-5M5 7h6" /></Cell>
      <Cell label="对象捕捉" on><path d="M3 3h8v8H3z" fill="#fff" /><path d="M1 1h3v3H1z" fill="#f6c48a" stroke="#c67a2a" /></Cell>
      <Cell label="三维对象捕捉"><path d="M4 2h7v6l-3 3H2V5z" fill="#eee" /></Cell>
      <Cell label="对象捕捉追踪"><path d="M10 1L2 10h9" /></Cell>
      <Cell label="动态 UCS"><path d="M2 1v10h9M2 11l8-8" /><path d="M8 1l3 3" stroke="#e89a2a" strokeWidth="2" /></Cell>
      <Cell label="动态输入" on><path d="M1 5h6M4 2v6M6 8h6" strokeWidth="1.800" /></Cell>
      <Cell label="线宽" on><path d="M1 6h10M6 2v8" strokeWidth="2" stroke="#012" /></Cell>
      <Cell label="透明度" on><path d="M1 1h11v11H1z" fill="#6faedb" stroke="#37c" strokeDasharray="1 1" /></Cell>
      <Cell label="快捷特性"><path d="M3 2h6v8H3zM3 4h6" /></Cell>
      <Cell label="选择循环"><path d="M1 3h5M3 1v6" /><path d="M5 5h7v6H5z" fill="#5ab04e" /></Cell>
      <Cell label="注释监视器"><path d="M4 1h4v3h3v4H8v3H4V8H1V4h3z" fill="#ddd" /></Cell>
      <div className="flex-1" />
      <Word>模型</Word>
      <Cell label="快速查看布局"><path d="M1 1h10v9H1zM3 3l4 4" fill="#ddd" /></Cell>
      <Cell label="快速查看图形"><path d="M0 2h5v5H0zM7 2h5v5H7zM0 10h12" fill="#ddd" /></Cell>
      <span className="w-[16px]" />
      <button className="flex w-[40px] shrink-0 items-start gap-[2px] bg-[#999]">
        <Svg w={11} h={12}><path d="M5.500 1l1.500 5 3 5-4.500-2L1 11l3-5z" fill="#ddd" strokeWidth="1" /></Svg>1:1<Down w={6} className="mt-[4px]" />
      </button>
      <Cell label="注释可见性"><path d="M5 1l1.500 5 3 5L5 9l-4 2 3-5z" fill="#ddd" strokeWidth="1" /><circle cx="9" cy="8" r="2.500" fill="#f2b33c" stroke="none" /></Cell>
      <Cell label="自动缩放"><path d="M5 1l1.500 5 3 5L5 9l-4 2 3-5z" fill="#bbb" stroke="#777" strokeWidth="1" /></Cell>
      <span className="w-[4px]" />
      <Cell label="切换工作空间"><circle cx="6" cy="6" r="4.500" fill="#ddd" strokeWidth="2" strokeDasharray="2 1" /><circle cx="6" cy="6" r="1.500" /></Cell>
      <Cell label="锁定"><path d="M1 5h7v6H1zM6 5V3c0-3 5-3 5 0" fill="#ccc" /></Cell>
      <Cell label="硬件加速"><circle cx="6" cy="6" r="4.500" fill="#bbb" stroke="#888" /><path d="M3 4l3 3 4-4" stroke="#eee" /></Cell>
      <Word on>编组</Word>
      <Word>基线</Word>
      <Word>填充</Word>
      <Word on>加粗</Word>
      <Word>动态标注</Word>
      <span className="w-[3px]" />
      <Cell label="隔离对象" w="w-[25px]"><path d="M3 5a3 3 0 116 0L8 8H4z" fill="#ffe07a" stroke="#997a22" /><path d="M4.500 9.500h3" /></Cell>
      <IconButton label="状态栏菜单" className="w-[8px]"><Down w={4} fill="#000" /></IconButton>
      <Cell label="全屏显示"><path d="M1 1h10v9H1z" fill="#eee" /><path d="M1 2h10" strokeWidth="2" /></Cell>
      <span className="w-[10px] shrink-0" />
    </footer>
  );
}

export default function App() {
  return (
    <div className={`flex h-screen flex-col overflow-hidden bg-[#6b6b6b] ${SANS}`}>
      <TitleBar />
      <TabRow />
      <Ribbon />
      <FileTabs />
      <div className="flex min-h-0 flex-1 pb-px">
        <SideMenu />
        <main className="relative flex min-w-0 flex-1 flex-col pt-px">
          <div className="relative flex min-h-0 flex-1">
            <div className="relative min-w-0 flex-1 overflow-hidden bg-black">
              <Drawing />
              <ViewTools />
              <Dialog />
            </div>
            <VScroll />
            <DynamicPrompt />
          </div>
          <LayoutTabs />
          <CommandLine />
          <Watermark />
        </main>
      </div>
      <StatusBar />
    </div>
  );
}
